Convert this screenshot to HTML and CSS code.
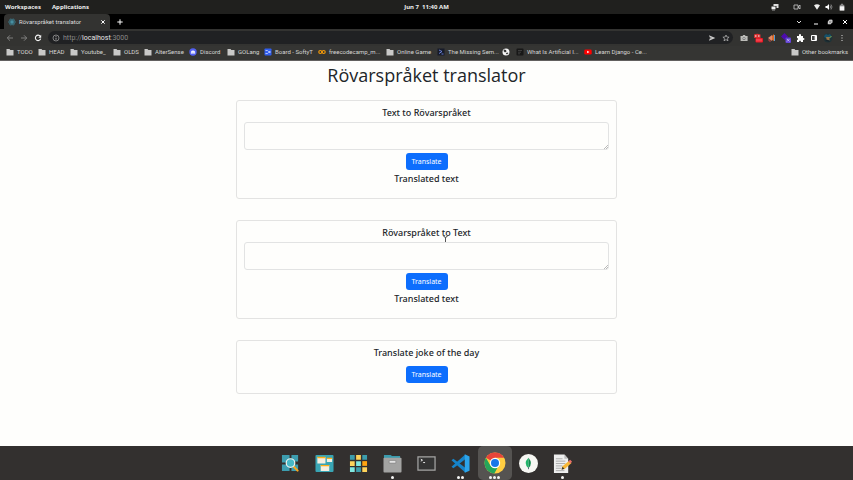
FILE: index.html
```html
<!DOCTYPE html>
<html lang="en">
<head>
<meta charset="utf-8">
<title>Rövarspråket translator</title>
<link rel="stylesheet" href="styles.css">
</head>
<body>
<svg class="defs" aria-hidden="true">
  <symbol id="folder" viewBox="0 0 8 8"><path d="M.5 1h3l.8 1h3.200v5.500H.5z" fill="#c9c9c8"/></symbol>
  <symbol id="grip" viewBox="0 0 5 5"><path d="M1 5l4-4M3 5l2-2" stroke="#aaa" stroke-width=".8"/></symbol>
</svg>
<header class="system">
  <nav class="system-menu"><a href="#">Workspaces</a><a href="#">Applications</a></nav>
  <time class="clock">Jun 7&nbsp; 11:40 AM</time>
  <div class="tray">
    <svg viewBox="0 0 8 8"><path d="M2.500 1h5v4h-2V3h-3z" fill="#ddd"/><path d="M.5 3.500h4v2.800h-4z" fill="#eee"/><path d="M1 7h3" stroke="#999"/></svg>
    <svg viewBox="0 0 8 8"><path d="M1 2h4v4H1zM5 4l2-2v4z" fill="none" stroke="#bbb" stroke-width=".9"/></svg>
    <svg viewBox="0 0 8 8"><path d="M1 2.200Q4 .2 7 2.200L4 6.800z" fill="#eee"/></svg>
    <svg viewBox="0 0 8 8"><path d="M.5 3H2l2-2v6L2 5H.5z" fill="#fff"/><path d="M5 2.500q1 1.500 0 3M6 1.500q2 2.500 0 5" fill="none" stroke="#999" stroke-width=".8"/></svg>
    <svg viewBox="0 0 8 8"><path d="M3 .8h2v1h1.300v5.700H1.700V1.800H3z" fill="#888"/><path d="M1.700 3.300h4.600v4.200H1.700z" fill="#f4f4f4"/></svg>
  </div>
</header>
<section class="tabs">
  <div class="tab">
    <svg viewBox="0 0 8 8"><g fill="none" stroke="#3c8296" stroke-width=".7"><ellipse cx="4" cy="4" rx="3.500" ry="1.400"/><ellipse cx="4" cy="4" rx="3.500" ry="1.400" transform="rotate(60 4 4)"/><ellipse cx="4" cy="4" rx="3.500" ry="1.400" transform="rotate(120 4 4)"/></g><circle cx="4" cy="4" r="1" fill="#4fa8bf"/></svg>
    <span>Rövarspråket translator</span>
    <button aria-label="Close tab"><svg viewBox="0 0 8 8"><path d="M2.300 2.300l3.400 3.400m0-3.400L2.300 5.700" stroke="#fff"/></svg></button>
  </div>
  <button aria-label="New tab"><svg viewBox="0 0 8 8"><path d="M4 1.300v5.400M1.300 4h5.400" stroke="#fff"/></svg></button>
  <div class="window-controls">
    <button aria-label="Search tabs"><svg viewBox="0 0 8 8"><path d="M2 3l2 2 2-2" fill="none" stroke="#ddd"/></svg></button>
    <button aria-label="Minimize"><svg viewBox="0 0 8 8"><path d="M2 6h4" stroke="#fff"/></svg></button>
    <button aria-label="Restore"><svg viewBox="0 0 8 8"><path d="M3.200 1.700h3.100v2.600L4.800 6.300H1.700V3.700z" fill="#999"/><path d="M3.500 2.200H6v2L4.500 5.700h-2v-2z" fill="none" stroke="#eee" stroke-width=".7"/></svg></button>
    <button aria-label="Close"><svg viewBox="0 0 8 8"><path d="M2 2l4 4m0-4L2 6" stroke="#fff"/></svg></button>
  </div>
</section>
<section class="toolbar">
  <div class="history">
    <button aria-label="Back"><svg viewBox="0 0 8 8"><path d="M7 4H1.300M4 1.300L1.300 4 4 6.700" fill="none" stroke="#878786" stroke-width=".9"/></svg></button>
    <button aria-label="Forward"><svg viewBox="0 0 8 8"><path d="M1 4h5.700M4 1.300L6.700 4 4 6.700" fill="none" stroke="#878786" stroke-width=".9"/></svg></button>
    <button aria-label="Reload"><svg viewBox="0 0 8 8"><path d="M6.300 2.300A2.700 2.700 0 1 0 6.700 4.600" fill="none" stroke="#f5f5f5" stroke-width="1.100"/><path d="M7.200.8v3H4.300z" fill="#f5f5f5"/></svg></button>
  </div>
  <div class="address">
    <svg viewBox="0 0 8 8"><circle cx="4" cy="4" r="3" fill="none" stroke="#999" stroke-width=".8"/><path d="M4 3.700v2M4 2v.9" stroke="#aaa" stroke-width=".9"/></svg>
    <a href="#">http://<b>localhost</b>:3000</a>
    <button aria-label="Send"><svg viewBox="0 0 8 8"><path d="M1 1.300L7.300 4 1 6.700l.8-2.200L4 4l-2.200-.5z" fill="#ccc"/></svg></button>
    <button aria-label="Bookmark"><svg viewBox="0 0 8 8"><path d="M4 1l.9 2 2.200.2-1.700 1.500.6 2.100-2-1.200-2 1.200.6-2.100L.9 3.200 3.100 3z" fill="none" stroke="#bbb" stroke-width=".7"/></svg></button>
  </div>
  <div class="extensions">
    <button aria-label="Camera"><svg viewBox="0 0 10 10"><path d="M1.500 3H3.500l.8-1h1.500l.8 1h2v5h-7z" fill="#bdbdb9"/><circle cx="5" cy="5.400" r="1.500" fill="#777"/><circle cx="5" cy="5.400" r=".7" fill="#ddd"/></svg></button>
    <button aria-label="Blocker"><svg viewBox="0 0 10 10"><path d="M1 1.500Q4 0 7.500 1.500V5H1z" fill="#d63131"/><path d="M2 3h1.500M5 3h1.500" stroke="#fff"/><rect x="2.500" y="5" width="7.500" height="4.500" rx="1" fill="#ed1824"/><path d="M4 6v2.500M6 6v2.500M8 6v2.500" stroke="#ff8790" stroke-width=".7"/></svg></button>
    <button aria-label="Announcements"><svg viewBox="0 0 10 10"><path d="M1 5l4-3v6z" fill="#e58b68"/><path d="M5 3l2-2v7L5 7z" fill="#d96c2d"/><path d="M7.500 2v6" stroke="#589ed4"/><path d="M2 6v2h2" stroke="#b74444" fill="none"/></svg></button>
    <button aria-label="Purple extension"><svg viewBox="0 0 10 10"><path d="M3.500 0L7 3.500 3.500 7 0 3.500z" fill="#4d0cae"/><rect x="4.500" y="4.500" width="5.500" height="5.500" rx="1" fill="#6545d7"/><path d="M6 6l2.500 2.500m0-2.500L6 8.500" stroke="#d7cff8" stroke-width=".7"/></svg></button>
    <button aria-label="Extensions"><svg viewBox="0 0 10 10"><path d="M2 3h2q-.5-2 1-2t1 2h2v2q1.500 0 1.500 1T8 7v2H6q0-1.500-1-1.500T4 9H2V7q1-.2 1-1T2 5z" fill="#fff"/></svg></button>
    <button aria-label="Side panel"><svg viewBox="0 0 10 10"><path d="M2.500 2.500h5v5h-5z" fill="#444" stroke="#fff" stroke-width="1"/><path d="M6.300 2.500v5" stroke="#fff" stroke-width="1.300"/></svg></button>
    <button aria-label="Profile"><svg viewBox="0 0 10 10"><circle cx="5" cy="5" r="4.500" fill="#1f3438"/><path d="M1 3l2-2 2 1 2-1 2 3-2 1-2-1-3 1z" fill="#17526b"/><path d="M3 4h3.500v3.500H4z" fill="#9a7546"/><path d="M2 8q3-3 5 1" fill="#18242c"/><path d="M6.500 4.500l2-1" stroke="#b5c62e" stroke-width=".7"/></svg></button>
    <button aria-label="Menu"><svg viewBox="0 0 10 10"><path d="M4.500 2h1v1h-1zm0 2.500h1v1h-1zm0 2.500h1v1h-1z" fill="#ddd"/></svg></button>
  </div>
</section>
<nav class="bookmarks" aria-label="Bookmarks">
  <a href="#"><svg><use href="#folder"/></svg>TODO</a>
  <a href="#"><svg><use href="#folder"/></svg>HEAD</a>
  <a href="#"><svg><use href="#folder"/></svg>Youtube_</a>
  <a href="#"><svg><use href="#folder"/></svg>OLDS</a>
  <a href="#"><svg><use href="#folder"/></svg>AlterSense</a>
  <a href="#"><svg viewBox="0 0 8 8"><circle cx="4" cy="4" r="3.700" fill="#5361f2"/><path d="M1.700 5.300L2.300 3Q4 2 5.700 3l.6 2.300L5 5.800l-1-.5-1 .5z" fill="#fff"/><path d="M3 3.800v.8m2-.8v.8" stroke="#5361f2" stroke-width=".7"/></svg>Discord</a>
  <a href="#"><svg><use href="#folder"/></svg>GOLang</a>
  <a href="#"><svg viewBox="0 0 8 8"><rect x=".5" y=".5" width="7" height="7" rx=".8" fill="#315ff0"/><path d="M1.500 2.500h2l1 1h2m-5 2h2l1-1h2" fill="none" stroke="#bac9ff" stroke-width=".9"/></svg>Board - SoftyT</a>
  <a href="#"><svg viewBox="0 0 8 8"><g fill="none" stroke="#f49a09" stroke-width="1.200"><circle cx="2.300" cy="4" r="1.500"/><circle cx="5.700" cy="4" r="1.500"/></g></svg>freecodecamp_m...</a>
  <a href="#"><svg><use href="#folder"/></svg>Online Game</a>
  <a href="#"><svg viewBox="0 0 8 8"><path d="M.5.5h7v7h-7z" fill="#171b29"/><path d="M2 2l3 1.500L2 5.500M4.500 6h2" fill="none" stroke="#708be8" stroke-width=".9"/></svg>The Missing Sem...</a>
  <a href="#" aria-label="Website"><svg viewBox="0 0 8 8"><circle cx="4" cy="4" r="3.500" fill="#f4f4f4"/><path d="M2 1.500l2 .5.5 1.500L3 4.500 1.500 3zM5 4.500l1.500.5L5 6.500 3.800 5.500z" fill="#333"/></svg></a>
  <a href="#"><svg viewBox="0 0 8 8"><rect x=".5" y=".5" width="7" height="7" rx="1" fill="#171717"/><path d="M2 2.500h4m-4 1.700h3m-3 1.600h2" stroke="#555" stroke-width=".6"/></svg>What Is Artificial I...</a>
  <a href="#"><svg viewBox="0 0 8 8"><rect x=".3" y="1.500" width="7.400" height="5" rx="1.300" fill="#f00"/><path d="M3.200 2.700v2.600L5.400 4z" fill="#fff"/></svg>Learn Django - Ce...</a>
  <a class="other" href="#"><svg><use href="#folder"/></svg>Other bookmarks</a>
</nav>
<main>
  <h1>Rövarspråket translator</h1>
  <section class="card">
    <h2><label for="encode">Text to Rövarspråket</label></h2>
    <div class="field"><textarea id="encode"></textarea><svg class="grip"><use href="#grip"/></svg></div>
    <button class="translate">Translate</button>
    <h2>Translated text</h2>
  </section>
  <section class="card">
    <h2><label for="decode">Rövarspråket to Text</label><svg class="cursor" viewBox="0 0 7 9"><path d="M1.500.5Q3.500.5 3.500 2q0-1.500 2-1.500M3.500 2v5M1.500 8.500q2 0 2-1.500 0 1.500 2 1.500" fill="none" stroke="#555"/></svg></h2>
    <div class="field"><textarea id="decode"></textarea><svg class="grip"><use href="#grip"/></svg></div>
    <button class="translate">Translate</button>
    <h2>Translated text</h2>
  </section>
  <section class="card joke">
    <h2>Translate joke of the day</h2>
    <button class="translate">Translate</button>
  </section>
</main>
<footer class="dock">
  <button aria-label="Launcher"><svg viewBox="0 0 20 20"><path d="M1 1h8v8H1zm10 0h7v7h-7zM1 11h8v7H1zm10 0h7v7h-7z" fill="#3d9daf"/><path d="M13.500 13.500l4 4" stroke="#faa41a" stroke-width="2.200" stroke-linecap="round"/><circle cx="10" cy="9.500" r="4.500" fill="#48b9c7" stroke="#edf3ef" stroke-width="1.300"/></svg></button>
  <button aria-label="Workspaces"><svg viewBox="0 0 20 20"><rect x=".5" y="1" width="19" height="18" rx="1" fill="#39a5b4"/><path d="M2.500 3.500H11V10H2.500zM12.500 4.500H18v4h-5.500zM6 11.500h9V18H6z" fill="#f5eee0"/><path d="M2.500 3H11v1.500H2.500zm10 1H18v1.300h-5.500zM6 11.500h9V13H6z" fill="#ffad16"/></svg></button>
  <button aria-label="Applications"><svg viewBox="0 0 20 20"><path d="M1 1h5v5H1zM14 1h5v5h-5zM7.500 14h5v5h-5z" fill="#3c9dac"/><path d="M7.500 1h5v5h-5zM1 7.500h5v5H1zM14 14h5v5h-5z" fill="#ffd35b"/><path d="M7.500 7.500h5v5h-5zM1 14h5v5H1z" fill="#81e8e1"/><path d="M14 7.500h5v5h-5z" fill="#ffa411"/></svg></button>
  <button aria-label="Files"><svg viewBox="0 0 20 20"><path d="M1 4V1h7l1.500 1H18v3H1z" fill="#3a9bad"/><rect x=".5" y="4" width="19" height="15.500" rx="1" fill="#a3a3a2"/><path d="M6.500 7h7v2.500h-7z" fill="#eee" stroke="#777" stroke-width=".6"/></svg><i><b></b></i></button>
  <button aria-label="Terminal"><svg viewBox="0 0 20 20"><path d="M1 3h18v14H1z" fill="#343434" stroke="#a5a5a4" stroke-width="1.300"/><path d="M4 5.500l1.800 1-1.800 1m2.500 1.500h2" fill="none" stroke="#eee" stroke-width="1"/></svg></button>
  <button aria-label="Code editor"><svg viewBox="0 0 20 20"><path d="M.5 6.500L2.500 5 15 14.500V19.500z" fill="#1684ca"/><path d="M.5 13.500L2.500 15 15 5.500V.5z" fill="#1684ca"/><path d="M14.500.3l5 2.200v15l-5 2.200z" fill="#2ca4ea"/></svg><i><b></b><b></b></i></button>
  <button class="active" aria-label="Browser"><svg viewBox="0 0 22 22"><circle cx="11" cy="11" r="10.500" fill="#ffcd41"/><path d="M11 11L1.900 5.700A10.500 10.500 0 0 1 20.100 5.700H11z" fill="#e7443a"/><path d="M1.900 5.700L6.400 13.600Q9 17 13.500 15.800L10.300 21.500A10.500 10.500 0 0 1 1.900 5.700z" fill="#25a65a"/><circle cx="11" cy="11" r="5.200" fill="#fff"/><circle cx="11" cy="11" r="4" fill="#1976e9"/></svg><i><b></b><b></b><b></b></i></button>
  <button aria-label="Database"><svg viewBox="0 0 20 20"><circle cx="10" cy="10" r="10" fill="#f7f7f3"/><path d="M10 4q-6 6 0 11z" fill="#21b56a"/><path d="M10 4q5 6 0 11z" fill="#118a4e"/><path d="M10 14v2" stroke="#567"/></svg></button>
  <button aria-label="Text editor"><svg viewBox="0 0 20 20"><path d="M1 .5h11L16 5v15H1z" fill="#eee"/><path d="M12 .5V5h4" fill="#bbb"/><path d="M3 5h7M3 7.500h10M3 10h10M3 12.500h7M3 15h6M3 17.500h9" stroke="#999" stroke-width=".8"/><path d="M9 16l1-3 7-6 2.500 2.500L12 16z" fill="#f8b735"/><path d="M16 8l2-2 2 2-1.500 2z" fill="#e96f69"/><path d="M9 16.500l1-3 2 2z" fill="#333"/></svg><i><b></b></i></button>
</footer>
</body>
</html>
```
FILE: styles.css
```css
* { box-sizing: border-box; }
body { margin: 0; min-height: 100vh; display: flex; flex-direction: column; background: #fefefc; color: #212529; font-family: "Noto Sans", sans-serif; }
button { padding: 0; border: 0; background: none; color: inherit; font: inherit; display: flex; align-items: center; justify-content: center; }
a { color: inherit; text-decoration: none; }
svg { display: block; flex: none; width: 8px; height: 8px; overflow: visible; }
.defs { position: absolute; width: 0; height: 0; }

.system { height: 14px; display: grid; grid-template-columns: 1fr auto 1fr; align-items: center; background: #20201e; color: #eee; font: 700 6px/14px "Noto Sans", sans-serif; }
.system-menu { display: flex; gap: 11px; padding-left: 5px; }
.tray { display: grid; grid-template-columns: 22px 20px 12px 13px 8px; justify-content: end; padding-right: 7px; }

.tabs { height: 15px; display: flex; align-items: center; background: #000; color: #ddd; }
.tab { width: 106px; height: 15px; margin-left: 4px; margin-right: 6px; padding: 0 3px 0 4px; display: flex; align-items: center; gap: 3px; background: #333331; border-radius: 4px 4px 0 0; font: 6px/15px Roboto, sans-serif; }
.tab span { flex: 1; white-space: nowrap; }
.window-controls { margin-left: auto; margin-right: 4px; display: grid; grid-template-columns: 17px 14px 15px 8px; }
.window-controls button { justify-content: flex-start; }

.toolbar { height: 17px; display: flex; align-items: center; background: #333331; }
.history { width: 48px; padding-left: 6px; display: flex; gap: 6px; }
.address { flex: 1; height: 13px; padding: 0 3px 0 4px; display: flex; align-items: center; gap: 3px; border-radius: 7px; background: #202123; color: #888; font: 7px/13px Roboto, sans-serif; }
.address a { flex: 1; padding-top: 1px; }
.address b { font-weight: 400; color: #e5e5e5; }
.address button + button { margin-left: 3px; }
.extensions { width: 120px; padding-left: 6px; display: grid; grid-template-columns: repeat(8, 14px); }
.extensions button { justify-content: flex-start; }
.extensions svg { width: 10px; height: 10px; }

.bookmarks { height: 15px; padding: 0 5px 2px 6px; display: grid; grid-template-columns: 32px 32px 43px 31px 45px 38px 37px 54px 68px 51px 65px 14px 68px 70px 1fr; align-items: center; background: #353533; border-bottom: 1px solid #62605f; color: #d5d5d3; font: 6px/12px Roboto, sans-serif; white-space: nowrap; }
.bookmarks a { display: flex; align-items: center; gap: 3px; }
.bookmarks .other { justify-self: end; }

main { flex: 1; padding: 0 8px; display: flex; flex-direction: column; align-items: center; }
h1 { margin: 0 0 10px; font: 500 18px/29px "Open Sans", "Noto Sans", sans-serif; }
h2 { position: relative; margin: 0; font-size: 9px; line-height: 12px; font-weight: 500; }
.card { width: 100%; max-width: 381px; margin-bottom: 21px; padding: 6px 7px 13px; display: flex; flex-direction: column; align-items: center; border: 1px solid #e3e3e2; border-radius: 3px; }
.field { position: relative; width: 100%; margin: 3px 0; }
textarea { display: block; width: 100%; height: 28px; padding: 4px 6px; resize: none; border: 1px solid #e2e3e3; border-radius: 3px; background: #fefefc; font: 8px/12px "Noto Sans", sans-serif; }
.grip { position: absolute; right: 1px; bottom: 1px; width: 5px; height: 5px; }
.translate { width: 42px; height: 17px; margin-bottom: 3px; border-radius: 3px; background: #0d6efd; color: #fff; font-size: 7px; }
.joke { gap: 7px; margin-bottom: 0; padding-bottom: 7px; }
.cursor { position: absolute; left: 60px; top: 9px; width: 7px; height: 9px; }

.dock { height: 34px; display: flex; justify-content: center; background: #33302f; }
.dock button { position: relative; width: 34px; height: 34px; }
.dock svg { width: 19px; height: 19px; }
.dock .active { background: #555351; border-radius: 5px; }
.dock .active svg { width: 22px; height: 22px; }
.dock i { position: absolute; left: 0; right: 0; bottom: 1px; display: flex; justify-content: center; gap: 1px; }
.dock i b { width: 3px; height: 3px; border-radius: 50%; background: #f5f5f4; }
```
